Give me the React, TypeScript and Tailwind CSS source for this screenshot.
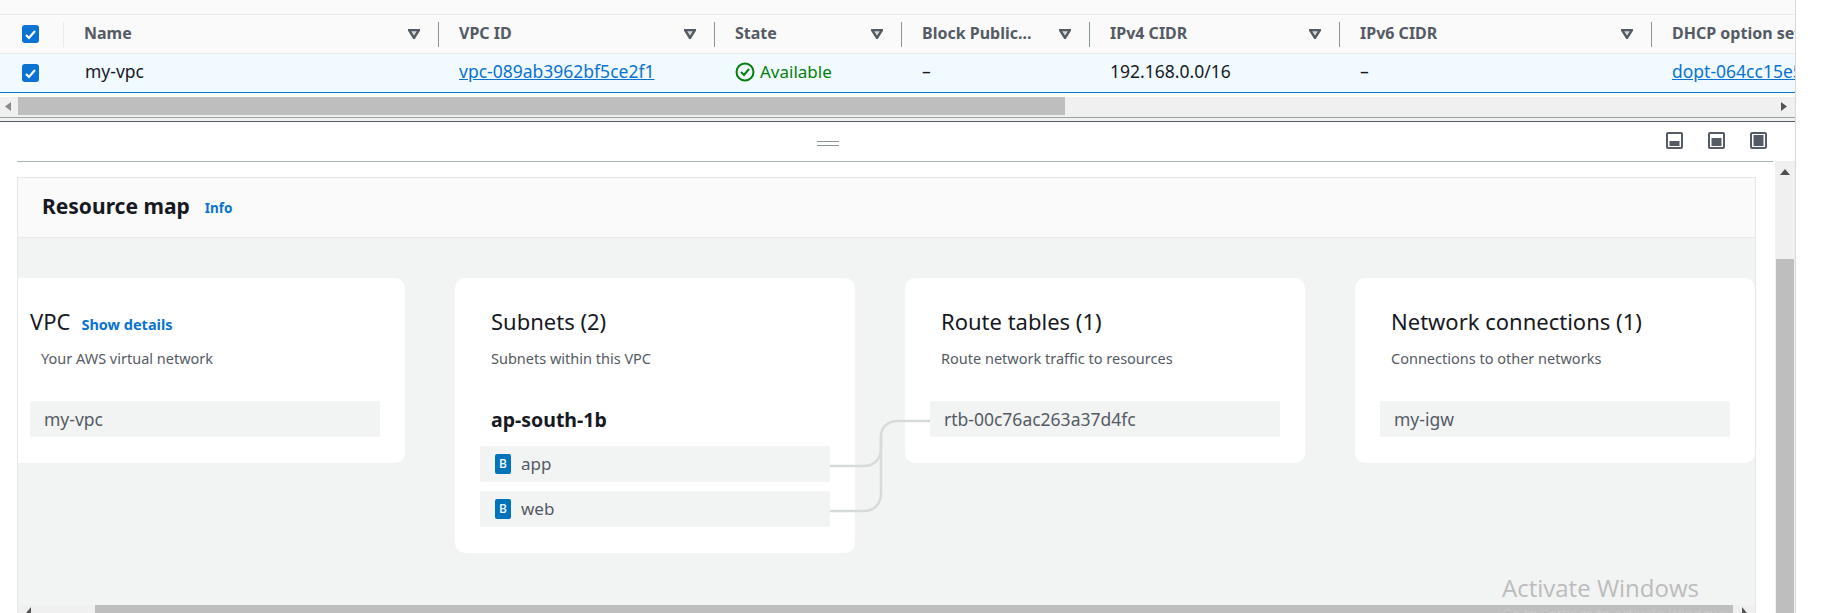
const columns = [
  { label: 'Name', width: 'w-[375px]', cell: <span className="text-[#16191f] ml-[1px]">my-vpc</span> },
  { label: 'VPC ID', width: 'w-[276px]', cell: <a className="text-[#0972d3] underline">vpc-089ab3962bf5ce2f1</a> },
  {
    label: 'State',
    width: 'w-[187px]',
    cell: (
      <span className="flex items-center gap-[5px] text-[17px] text-[#037f0c]">
        <svg width="20" height="20" viewBox="0 0 20 20" fill="none" stroke="#037f0c" strokeWidth="2">
          <circle cx="10" cy="10" r="8.5" />
          <path d="M6 10l3 3 5-6" />
        </svg>
        Available
      </span>
    ),
  },
  { label: 'Block Public...', width: 'w-[188px]', cell: <span className="text-[#16191f]">–</span> },
  { label: 'IPv4 CIDR', width: 'w-[250px]', cell: <span className="text-[#16191f]">192.168.0.0/16</span> },
  { label: 'IPv6 CIDR', width: 'w-[312px]', cell: <span className="text-[#16191f]">–</span> },
  { label: 'DHCP option set', width: 'w-[144px]', cell: <a className="text-[#0972d3] underline whitespace-nowrap">dopt-064cc15e5f</a>, noSort: true },
];

const Checkbox = () => (
  <div className="w-[17px] h-[18px] rounded-[3px] bg-[#0972d3] flex items-center justify-center">
    <svg width="13" height="13" viewBox="0 0 13 13" fill="none" stroke="#fff" strokeWidth="2.2">
      <path d="M2 7l3 3 6-7" />
    </svg>
  </div>
);

const SortIcon = () => (
  <svg width="12" height="10" viewBox="0 0 12 10" fill="#d5dbdb" stroke="#545b64" strokeWidth="2.4">
    <path d="M1 1h10L6 9z" />
  </svg>
);

const PaneIcon = ({ fill }: { fill: number }) => (
  <svg width="17" height="17" viewBox="0 0 17 17">
    <rect x="1" y="1" width="15" height="15" rx="1" fill="#fff" stroke="#545b64" strokeWidth="2" />
    <rect x="3.5" y={14 - fill} width="10" height={fill} fill="#545b64" />
  </svg>
);

const ItemBox = ({ children }: { children: React.ReactNode }) => (
  <div className="h-9 w-[350px] rounded-[2px] bg-[#f2f3f3] flex items-center text-[17.5px] text-[#545b64]">{children}</div>
);

const SubnetRow = ({ name }: { name: string }) => (
  <ItemBox>
    <span className="ml-[15px] w-4 h-5 rounded-[2px] bg-[#0073bb] text-white text-[12px] font-medium flex items-center justify-center">B</span>
    <span className="ml-[10px] text-[17px]">{name}</span>
  </ItemBox>
);

const CardHead = ({ title, sub }: { title: string; sub: string }) => (
  <div className="pl-[36px] pt-[28px]">
    <div className="text-[22px] leading-[30px] text-[#16191f]">{title}</div>
    <div className="text-[14.5px] leading-5 mt-[12px] text-[#545b64]">{sub}</div>
  </div>
);

export default function App() {
  return (
    <div className="w-[1822px] h-[613px] overflow-hidden bg-white font-['Noto_Sans',sans-serif] text-[16px]">
      <div className="w-[1796px] h-full border-r border-[#d5dbdb] flex flex-col relative">
        <div className="h-[15px] shrink-0 bg-[#fafafa] border-b border-[#e9ebed]" />

        {/* table header */}
        <div className="h-[39px] shrink-0 flex items-center overflow-hidden bg-[#fafafa] border-b border-[#e9ebed]">
          <div className="w-[64px] shrink-0 pl-[22px] flex items-center h-[25px] border-r border-[#e9ebed]">
            <Checkbox />
          </div>
          {columns.map((col) => (
            <div key={col.label} className={`${col.width} shrink-0 h-[25px] flex items-center justify-between pl-[20px] pr-[18px] border-r border-[#879596] whitespace-nowrap`}>
              <span className="font-bold text-[#545b64] pb-[2px]">{col.label}</span>
              {!col.noSort && <SortIcon />}
            </div>
          ))}
        </div>

        {/* selected row */}
        <div className="h-[39px] shrink-0 flex items-center overflow-hidden bg-[#f1faff] border-b border-[#0972d3]">
          <div className="w-[64px] shrink-0 pl-[22px]">
            <Checkbox />
          </div>
          {columns.map((col) => (
            <div key={col.label} className={`${col.width} shrink-0 pl-[20px] pb-[3px] text-[17.5px]`}>
              {col.cell}
            </div>
          ))}
        </div>

        {/* table scrollbar */}
        <div className="h-[4px] shrink-0" />
        <div className="h-[20px] shrink-0 bg-[#f0f0f0] flex items-start justify-between pl-[5px] pr-[8px] relative">
          <div className="absolute left-[18px] top-0 w-[1047px] h-[18px] bg-[#bebebe]" />
          <svg className="mt-[5px]" width="6" height="9" viewBox="0 0 6 9"><path d="M6 0v9L0 4.5z" fill="#8a8a8a" /></svg>
          <svg className="mt-[5px]" width="6" height="9" viewBox="0 0 6 9"><path d="M0 0v9l6-4.500z" fill="#555" /></svg>
        </div>
        <div className="h-[4px] shrink-0 bg-[#f0f0f0] border-t border-[#9aa3a3]" />
        <div className="h-[1px] shrink-0 bg-[#545b64]" />

        {/* split panel toolbar */}
        <div className="h-[39px] shrink-0 relative flex items-center justify-end gap-[25px] pr-[28px] pb-[2px]">
          <div className="absolute left-[817px] top-[19px] w-[22px] h-[5px] border-y border-[#879596]" />
          <PaneIcon fill={5} />
          <PaneIcon fill={8} />
          <PaneIcon fill={11} />
        </div>

        <div className="flex-1 min-h-0 flex">
          <div className="flex-1 min-w-0 flex flex-col">
            <div className="ml-[17px] mr-[2px] pt-[15px] border-t border-[#aab7b8]" />
            <div className="ml-[17px] w-[1739px] flex-1 min-h-0 flex flex-col border-x border-t border-[#e4e7e9] relative overflow-hidden">
              <div className="h-[60px] shrink-0 bg-[#fafafa] border-b border-[#e9ebed] flex items-center pl-[24px] pb-[2px]">
                <span className="text-[21px] font-bold text-[#16191f]">Resource map</span>
                <span className="ml-[15px] mt-[3px] text-[13.5px] font-bold text-[#0972d3]">Info</span>
              </div>

              <div className="flex-1 min-h-0 bg-[#f2f3f3] relative flex flex-col">
                <div className="pt-[40px] flex items-start gap-[50px]">
                  {/* cut off by the map's horizontal scroll */}
                  <div className="w-[387px] h-[185px] shrink-0 bg-white rounded-r-[10px]">
                    <div className="pl-[12px] pt-[28px] flex items-baseline">
                      <span className="text-[22px] leading-[30px] text-[#16191f]">VPC</span>
                      <span className="ml-[11px] text-[14.5px] font-bold text-[#0972d3]">Show details</span>
                    </div>
                    <div className="pl-[23px] text-[14.5px] leading-5 mt-[12px] text-[#545b64]">Your AWS virtual network</div>
                    <div className="ml-[12px] mt-[33px] w-[350px]">
                      <ItemBox><span className="ml-[14px]">my-vpc</span></ItemBox>
                    </div>
                  </div>

                  <div className="w-[400px] h-[275px] shrink-0 bg-white rounded-[10px]">
                    <CardHead title="Subnets (2)" sub="Subnets within this VPC" />
                    <div className="pl-[36px] mt-[34px] h-9 flex items-center font-bold text-[19.5px] text-[#16191f]">ap-south-1b</div>
                    <div className="ml-[25px] mt-[8px] flex flex-col gap-[9px]">
                      <SubnetRow name="app" />
                      <SubnetRow name="web" />
                    </div>
                  </div>

                  <div className="w-[400px] h-[185px] shrink-0 bg-white rounded-[10px]">
                    <CardHead title="Route tables (1)" sub="Route network traffic to resources" />
                    <div className="ml-[25px] mt-[33px]">
                      <ItemBox><span className="ml-[14px]">rtb-00c76ac263a37d4fc</span></ItemBox>
                    </div>
                  </div>

                  <div className="w-[400px] h-[185px] shrink-0 bg-white rounded-[10px]">
                    <CardHead title="Network connections (1)" sub="Connections to other networks" />
                    <div className="ml-[25px] mt-[33px]">
                      <ItemBox><span className="ml-[14px]">my-igw</span></ItemBox>
                    </div>
                  </div>
                </div>

                {/* connector lines between subnets and route table */}
                <svg className="absolute left-[812px] top-[170px]" width="120" height="110" viewBox="0 0 120 110" fill="none" stroke="#d5dbdb" strokeWidth="2.5">
                  <path d="M0 58h34c10 0 17-7 17-18V28C51 19 58 13 68 13h32" />
                  <path d="M0 103h34c10 0 17-7 17-18V30" />
                </svg>

                {/* map scrollbar */}
                <div className="absolute left-0 right-0 bottom-0 h-[8px] bg-[#f0f0f0]">
                  <svg className="absolute left-[8px] top-[2px]" width="5" height="6" viewBox="0 0 5 6"><path d="M5 0v6H0z" fill="#555" /></svg>
                  <div className="absolute left-[77px] top-0 w-[1638px] h-full bg-[#bebebe]" />
                  <svg className="absolute left-[1724px] top-[2px]" width="5" height="6" viewBox="0 0 5 6"><path d="M0 0v6h5z" fill="#555" /></svg>
                </div>
              </div>

              {/* windows activation watermark */}
              <div className="absolute left-[1484px] top-[394px] w-[232px] overflow-hidden whitespace-nowrap font-['Open_Sans',sans-serif] pointer-events-none">
                <div className="text-[24px] leading-[32px] text-[#bcbcbc]">Activate Windows</div>
                <div className="text-[14px] leading-[20px] text-[#c8c8c8]">Go to Settings to activate Windows.</div>
              </div>
            </div>
          </div>

          {/* page scrollbar */}
          <div className="w-[20px] shrink-0 bg-[#f0f0f0] flex flex-col items-center">
            <svg className="mt-[8px]" width="10" height="6" viewBox="0 0 10 6"><path d="M0 6h10L5 0z" fill="#505050" /></svg>
            <div className="w-[18px] flex-1 mt-[84px] bg-[#bebebe]" />
          </div>
        </div>
      </div>
    </div>
  );
}
